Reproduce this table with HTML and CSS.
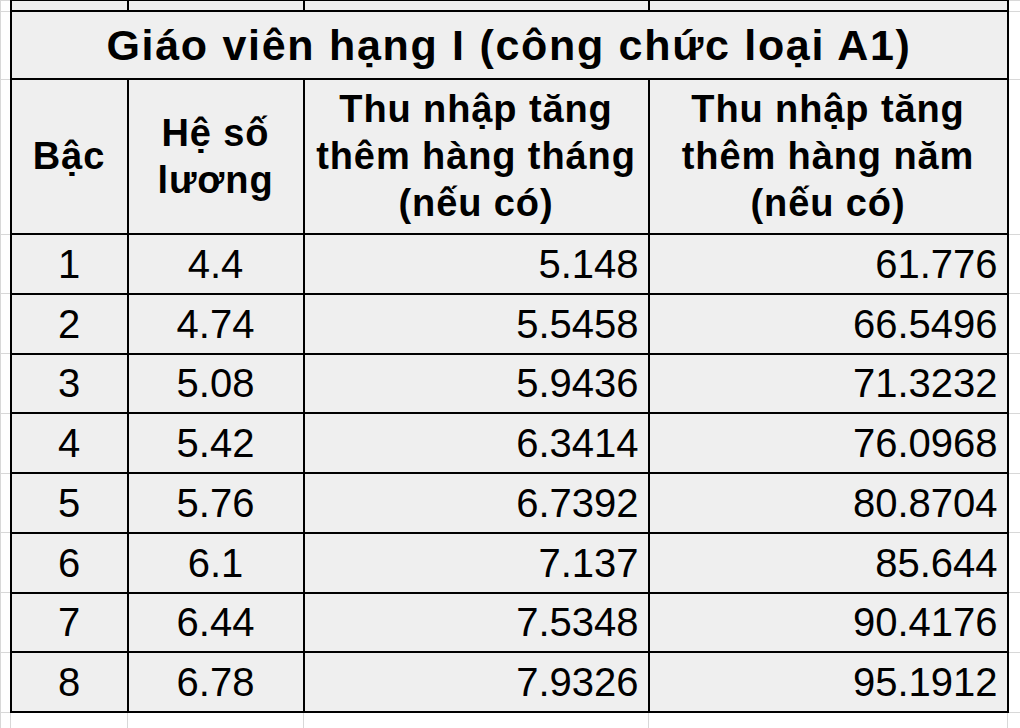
FILE: index.html
```html
<!DOCTYPE html>
<html lang="vi">
<head>
<meta charset="utf-8">
<title>Giáo viên hạng I</title>
<link rel="stylesheet" href="styles.css">
</head>
<body>
<table class="sheet">
  <colgroup>
    <col class="c0"><col class="c1"><col class="c2"><col class="c3"><col class="c4"><col class="c5">
  </colgroup>
  <tr class="r-top">
    <td class="out"></td><td class="in"></td><td class="in"></td><td class="in"></td><td class="in"></td><td class="out"></td>
  </tr>
  <tr class="r-title">
    <td class="out"></td>
    <td class="in title" colspan="4">Giáo viên hạng I (công chức loại A1)</td>
    <td class="out"></td>
  </tr>
  <tr class="r-head">
    <td class="out"></td>
    <td class="in head">Bậc</td>
    <td class="in head">Hệ số<br>lương</td>
    <td class="in head">Thu nhập tăng<br>thêm hàng tháng<br>(nếu có)</td>
    <td class="in head">Thu nhập tăng<br>thêm hàng năm<br>(nếu có)</td>
    <td class="out"></td>
  </tr>
  <tr class="r-data"><td class="out"></td><td class="in ctr">1</td><td class="in ctr">4.4</td><td class="in num">5.148</td><td class="in num">61.776</td><td class="out"></td></tr>
  <tr class="r-data"><td class="out"></td><td class="in ctr">2</td><td class="in ctr">4.74</td><td class="in num">5.5458</td><td class="in num">66.5496</td><td class="out"></td></tr>
  <tr class="r-data"><td class="out"></td><td class="in ctr">3</td><td class="in ctr">5.08</td><td class="in num">5.9436</td><td class="in num">71.3232</td><td class="out"></td></tr>
  <tr class="r-data"><td class="out"></td><td class="in ctr">4</td><td class="in ctr">5.42</td><td class="in num">6.3414</td><td class="in num">76.0968</td><td class="out"></td></tr>
  <tr class="r-data"><td class="out"></td><td class="in ctr">5</td><td class="in ctr">5.76</td><td class="in num">6.7392</td><td class="in num">80.8704</td><td class="out"></td></tr>
  <tr class="r-data"><td class="out"></td><td class="in ctr">6</td><td class="in ctr">6.1</td><td class="in num">7.137</td><td class="in num">85.644</td><td class="out"></td></tr>
  <tr class="r-data"><td class="out"></td><td class="in ctr">7</td><td class="in ctr">6.44</td><td class="in num">7.5348</td><td class="in num">90.4176</td><td class="out"></td></tr>
  <tr class="r-data"><td class="out"></td><td class="in ctr">8</td><td class="in ctr">6.78</td><td class="in num">7.9326</td><td class="in num">95.1912</td><td class="out"></td></tr>
  <tr class="r-bottom">
    <td class="out"></td><td class="out"></td><td class="out"></td><td class="out"></td><td class="out"></td><td class="out"></td>
  </tr>
</table>
</body>
</html>
```
FILE: styles.css
```css
html, body {
  margin: 0;
  padding: 0;
  background: #ffffff;
  overflow: hidden;
}

.sheet {
  border-collapse: collapse;
  table-layout: fixed;
  width: 1020px;
  margin-top: -1px;
  font-family: "Liberation Sans", Arial, sans-serif;
  color: #000000;
}

.c0 { width: 10px; }
.c1 { width: 117px; }
.c2 { width: 176px; }
.c3 { width: 345px; }
.c4 { width: 359px; }
.c5 { width: 13px; }

.sheet td {
  padding: 0;
  border: 1px solid #d8d8d8;
  background: #ffffff;
  overflow: hidden;
  white-space: nowrap;
}

.sheet td.in {
  border: 2px solid #000000;
  background: #efefef;
}

.r-top { height: 11px; }
.r-title { height: 68px; }
.r-head { height: 155px; }
.r-data { height: 59.75px; }
.r-bottom { height: 30px; }

.title {
  text-align: center;
  font-weight: bold;
  font-size: 43px;
  letter-spacing: 1.7px;
  line-height: 48px;
}

.head {
  text-align: center;
  font-weight: bold;
  font-size: 38px;
  letter-spacing: 0.9px;
  line-height: 47px;
}

.ctr {
  text-align: center;
  font-size: 40px;
  line-height: 44px;
}

.num {
  text-align: right;
  padding-right: 9px !important;
  font-size: 40px;
  line-height: 44px;
}
```
